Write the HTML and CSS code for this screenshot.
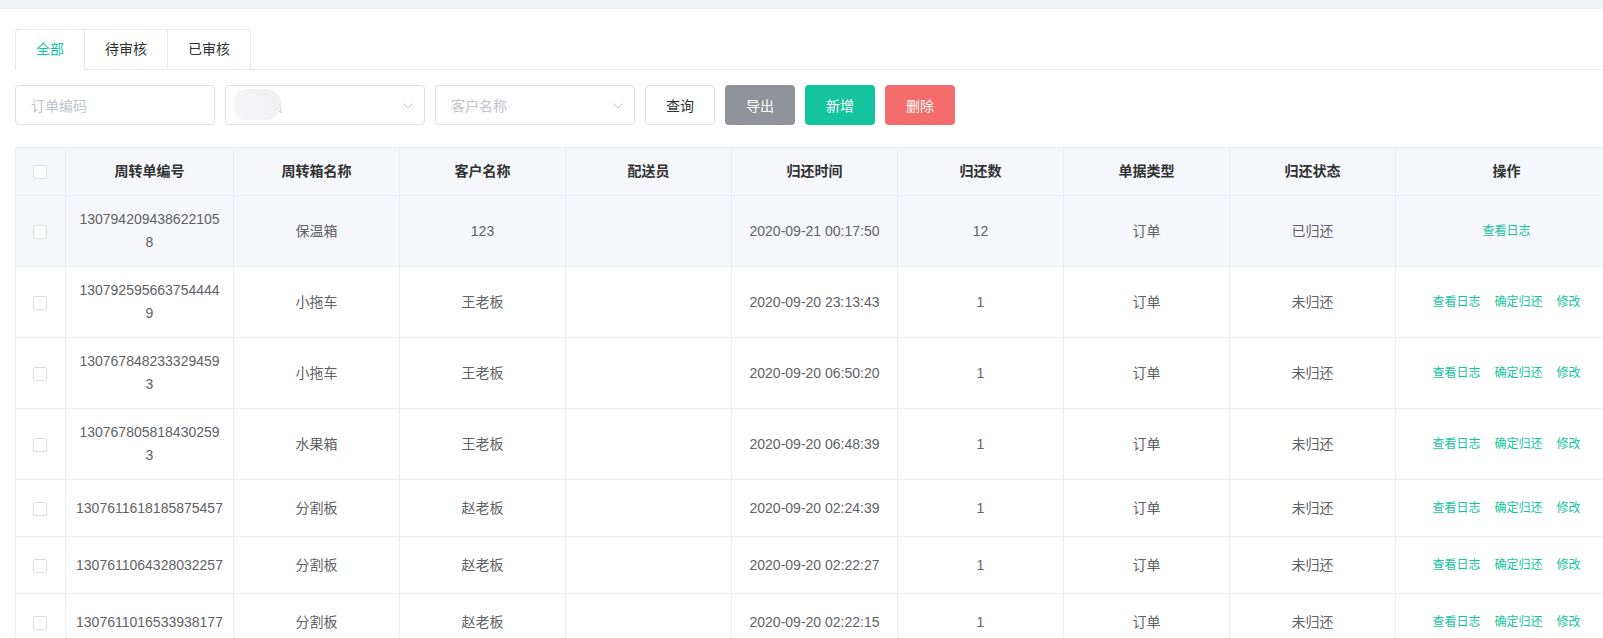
FILE: index.html
```html
<!DOCTYPE html>
<html lang="zh-CN">
<head>
<meta charset="utf-8">
<title>周转单</title>
<link rel="stylesheet" href="styles.css">
</head>
<body>
<div class="topbar"></div>
<div class="page">
  <div class="tabs">
    <div class="tabs-nav">
      <div class="tab active">全部</div>
      <div class="tab">待审核</div>
      <div class="tab">已审核</div>
    </div>
  </div>

  <div class="filters">
    <div class="input"><span class="ph">订单编码</span></div>
    <div class="input select">
      <span class="ph">配送员</span>
      <span class="blur"></span>
      <svg class="chev" width="10" height="6" viewBox="0 0 10 6"><path d="M0.5 0.5 L5 5 L9.5 0.5" fill="none" stroke="#c0c4cc" stroke-width="1"/></svg>
    </div>
    <div class="input select">
      <span class="ph">客户名称</span>
      <svg class="chev" width="10" height="6" viewBox="0 0 10 6"><path d="M0.5 0.5 L5 5 L9.5 0.5" fill="none" stroke="#c0c4cc" stroke-width="1"/></svg>
    </div>
    <button class="btn btn-plain">查询</button>
    <button class="btn btn-info">导出</button>
    <button class="btn btn-success">新增</button>
    <button class="btn btn-danger">删除</button>
  </div>

  <table class="grid">
    <colgroup>
      <col class="c-sel"><col class="c-no"><col class="c-std"><col class="c-std"><col class="c-std"><col class="c-std"><col class="c-std"><col class="c-std"><col class="c-std"><col class="c-op">
    </colgroup>
    <thead>
      <tr>
        <th class="sel"><span class="cb"></span></th>
        <th>周转单编号</th>
        <th>周转箱名称</th>
        <th>客户名称</th>
        <th>配送员</th>
        <th>归还时间</th>
        <th>归还数</th>
        <th>单据类型</th>
        <th>归还状态</th>
        <th>操作</th>
      </tr>
    </thead>
    <tbody>
      <tr class="hover">
        <td class="sel"><span class="cb"></span></td>
        <td class="no">130794209438622105<br>8</td>
        <td>保温箱</td>
        <td>123</td>
        <td></td>
        <td>2020-09-21 00:17:50</td>
        <td>12</td>
        <td>订单</td>
        <td>已归还</td>
        <td class="ops"><span class="link">查看日志</span></td>
      </tr>
      <tr>
        <td class="sel"><span class="cb"></span></td>
        <td class="no">130792595663754444<br>9</td>
        <td>小拖车</td>
        <td>王老板</td>
        <td></td>
        <td>2020-09-20 23:13:43</td>
        <td>1</td>
        <td>订单</td>
        <td>未归还</td>
        <td class="ops"><span class="link">查看日志</span><span class="link">确定归还</span><span class="link">修改</span></td>
      </tr>
      <tr>
        <td class="sel"><span class="cb"></span></td>
        <td class="no">130767848233329459<br>3</td>
        <td>小拖车</td>
        <td>王老板</td>
        <td></td>
        <td>2020-09-20 06:50:20</td>
        <td>1</td>
        <td>订单</td>
        <td>未归还</td>
        <td class="ops"><span class="link">查看日志</span><span class="link">确定归还</span><span class="link">修改</span></td>
      </tr>
      <tr>
        <td class="sel"><span class="cb"></span></td>
        <td class="no">130767805818430259<br>3</td>
        <td>水果箱</td>
        <td>王老板</td>
        <td></td>
        <td>2020-09-20 06:48:39</td>
        <td>1</td>
        <td>订单</td>
        <td>未归还</td>
        <td class="ops"><span class="link">查看日志</span><span class="link">确定归还</span><span class="link">修改</span></td>
      </tr>
      <tr>
        <td class="sel"><span class="cb"></span></td>
        <td class="no">1307611618185875457</td>
        <td>分割板</td>
        <td>赵老板</td>
        <td></td>
        <td>2020-09-20 02:24:39</td>
        <td>1</td>
        <td>订单</td>
        <td>未归还</td>
        <td class="ops"><span class="link">查看日志</span><span class="link">确定归还</span><span class="link">修改</span></td>
      </tr>
      <tr>
        <td class="sel"><span class="cb"></span></td>
        <td class="no">1307611064328032257</td>
        <td>分割板</td>
        <td>赵老板</td>
        <td></td>
        <td>2020-09-20 02:22:27</td>
        <td>1</td>
        <td>订单</td>
        <td>未归还</td>
        <td class="ops"><span class="link">查看日志</span><span class="link">确定归还</span><span class="link">修改</span></td>
      </tr>
      <tr>
        <td class="sel"><span class="cb"></span></td>
        <td class="no">1307611016533938177</td>
        <td>分割板</td>
        <td>赵老板</td>
        <td></td>
        <td>2020-09-20 02:22:15</td>
        <td>1</td>
        <td>订单</td>
        <td>未归还</td>
        <td class="ops"><span class="link">查看日志</span><span class="link">确定归还</span><span class="link">修改</span></td>
      </tr>
    </tbody>
  </table>
</div>
</body>
</html>
```

FILE: styles.css
```css
html, body {
  margin: 0;
  padding: 0;
  overflow: hidden;
  background: #fff;
}

body {
  font-family: "Liberation Sans", "Noto Sans CJK SC", sans-serif;
  font-size: 14px;
  color: #606266;
}

.topbar {
  height: 9px;
  background: #eff2f5;
}

.page {
  padding: 20px 0 0 15px;
}

/* tabs */
.tabs {
  display: flex;
  border-bottom: 1px solid #e4e7ed;
  margin-bottom: 15px;
}

.tabs-nav {
  display: flex;
  border: 1px solid #e4e7ed;
  border-bottom: none;
  border-radius: 4px 4px 0 0;
  margin-bottom: -1px;
}

.tab {
  box-sizing: border-box;
  height: 40px;
  line-height: 39px;
  padding: 0 20px;
  font-size: 14px;
  color: #303133;
  border-left: 1px solid #e4e7ed;
  border-bottom: 1px solid transparent;
}

.tab:first-child {
  border-left: none;
}

.tab.active {
  color: #14c49e;
  border-bottom-color: #fff;
}

/* filters */
.filters {
  display: flex;
  align-items: center;
  gap: 10px;
  height: 40px;
  margin-bottom: 22px;
}

.input {
  position: relative;
  box-sizing: border-box;
  width: 200px;
  height: 40px;
  border: 1px solid #dcdfe6;
  border-radius: 4px;
  padding: 0 15px;
  display: flex;
  align-items: center;
}

.ph {
  color: #c0c4cc;
  font-size: 14px;
}

.select .chev {
  position: absolute;
  right: 11px;
  top: 17px;
}

.blur {
  position: absolute;
  left: 7px;
  top: 3px;
  width: 48px;
  height: 31px;
  border-radius: 14px 16px 16px 14px;
  background: linear-gradient(90deg, #f6f6f8 0%, #f3f3f5 45%, #f0f0f2 100%);
}

.btn {
  box-sizing: border-box;
  width: 70px;
  height: 40px;
  border-radius: 4px;
  border: 1px solid transparent;
  font-family: inherit;
  font-size: 14px;
  padding: 0;
  color: #fff;
}

.btn-plain {
  background: #fff;
  border-color: #dcdfe6;
  color: #303133;
}

.btn-info {
  background: #909399;
}

.btn-success {
  background: #14c49e;
}

.btn-danger {
  background: #f56c6c;
}

/* table */
.grid {
  table-layout: fixed;
  border-collapse: collapse;
  width: 1602px;
}

.c-sel { width: 50px; }
.c-no { width: 168px; }
.c-std { width: 166px; }
.c-op { width: 222px; }

.grid th,
.grid td {
  border: 1px solid #ebeef5;
  padding: 12px 10px;
  line-height: 23px;
  text-align: center;
  vertical-align: middle;
  overflow: hidden;
}

.grid th {
  background: #f5f7fa;
  color: #303133;
  font-weight: 700;
}

.grid tr.hover td {
  background: #f5f7fa;
}

.grid .sel {
  padding: 0 12px 0 10px;
}

.grid .no {
  white-space: nowrap;
}

.cb {
  display: inline-block;
  box-sizing: border-box;
  width: 14px;
  height: 14px;
  border: 1px solid #dcdfe6;
  border-radius: 2px;
  background: #fff;
  vertical-align: middle;
}

.link {
  display: inline-block;
  box-sizing: border-box;
  padding: 9px 0;
  border: 1px solid transparent;
  font-size: 12px;
  line-height: 1;
  color: #14c49e;
}

.link + .link {
  margin-left: 12px;
}
```
